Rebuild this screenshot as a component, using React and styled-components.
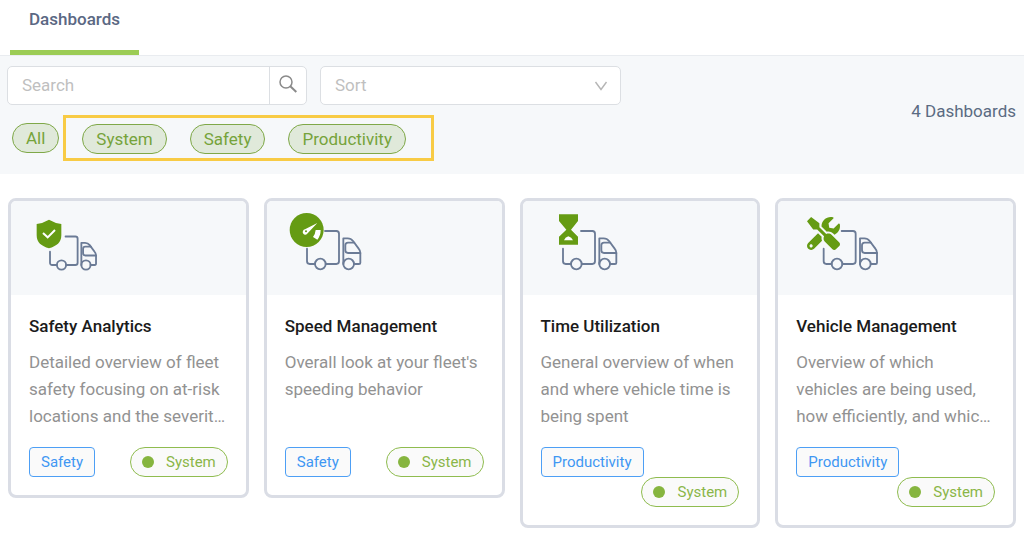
import React, { useState } from 'react'
import styled, { createGlobalStyle } from 'styled-components'
import { FaTools } from 'react-icons/fa'

const GlobalStyle = createGlobalStyle`
  * {
    box-sizing: border-box;
  }

  body {
    margin: 0;
    background: #fff;
    font-family: Roboto, Arial, sans-serif;
    font-size: 17px;
    color: #5b6b82;
  }

  button, input, select {
    font: inherit;
  }
`

const TabBar = styled.nav`
  display: flex;
  height: 56px;
  padding: 0 10px;
  border-bottom: 1px solid #e9ecf0;
`

const Tab = styled.a`
  height: 55px;
  padding: 8px 19px 0;
  border-bottom: 5px solid #9ccc55;
  font-weight: 500;
  line-height: 22px;
  color: #5b6883;
  text-decoration: none;
`

const Toolbar = styled.section`
  display: flex;
  align-items: center;
  justify-content: space-between;
  padding: 10px 8px 13px 7px;
  background: #f6f8fa;
`

const Fields = styled.div`
  display: flex;
  gap: 13px;
`

const SearchBox = styled.form`
  display: flex;
  width: 300px;
  height: 39px;
  background: #fff;
  border: 1px solid #dcdfe3;
  border-radius: 5px;
`

const SearchInput = styled.input`
  flex: 1;
  min-width: 0;
  padding: 0 14px 2px;
  border: 0;
  background: none;
  outline: none;

  &::placeholder {
    color: #bfbfbf;
  }
`

const SearchButton = styled.button`
  display: flex;
  align-items: center;
  justify-content: center;
  width: 37px;
  padding: 0 0 4px;
  border: 0;
  border-left: 1px solid #dcdfe3;
  background: none;
  color: #8a8a8a;
`

const SelectBox = styled.div`
  position: relative;
  width: 301px;

  svg {
    position: absolute;
    top: 13px;
    right: 13px;
    color: #b5b5b5;
    pointer-events: none;
  }
`

const Select = styled.select`
  width: 100%;
  height: 39px;
  padding: 0 14px 2px;
  appearance: none;
  background: #fff;
  border: 1px solid #dcdfe3;
  border-radius: 5px;
  color: #bfbfbf;
`

const Filters = styled.div`
  display: flex;
  align-items: center;
  gap: 4px;
  margin-top: 10px;
  padding-left: 5px;
`

const Highlight = styled.div`
  display: flex;
  gap: 23px;
  padding: 6px 25px 4px 16px;
  border: 3px solid #f8cb45;
`

const Pill = styled.button`
  height: 30px;
  padding: 0 13px;
  border: 1px solid #7fa848;
  border-radius: 15px;
  background: #e0e9da;
  color: #76a33a;
`

const Count = styled.div`
  padding-bottom: 6px;
`

const Cards = styled.main`
  display: grid;
  grid-template-columns: repeat(4, 1fr);
  gap: 15px;
  align-items: start;
  padding: 24px 8px 10px;

  @media (max-width: 800px) {
    grid-template-columns: repeat(2, 1fr);
  }
`

const Card = styled.article`
  overflow: hidden;
  border: 3px solid #dadde5;
  border-radius: 8px;
`

const CardHeader = styled.div`
  height: 94px;
  padding: 4px 18px 0;
  background: #f6f8fa;
`

const CardBody = styled.div`
  padding: 20px 18px 18px;
`

const CardTitle = styled.h2`
  margin: 0 0 12px;
  font-size: 17px;
  font-weight: 500;
  line-height: 22px;
  color: #1b1b1b;
`

const Description = styled.p`
  display: -webkit-box;
  height: 81px;
  margin: 0 0 17px;
  overflow: hidden;
  line-height: 27px;
  color: #929292;
  -webkit-box-orient: vertical;
  -webkit-line-clamp: 3;
`

const Tags = styled.div`
  display: flex;
  flex-wrap: wrap;
  column-gap: 8px;
`

const Tag = styled.span`
  height: 30px;
  padding: 0 11px;
  border: 1px solid #4d9ff5;
  border-radius: 4px;
  background: #fafafa;
  font-size: 15px;
  line-height: 28px;
  color: #3f97f3;
`

const SystemTag = styled(Tag)`
  display: flex;
  align-items: center;
  gap: 12px;
  margin-left: auto;
  border-color: #8fbc4f;
  border-radius: 15px;
  color: #8ab648;

  &::before {
    content: '';
    width: 12px;
    height: 12px;
    border-radius: 50%;
    background: #86b53f;
  }
`

function SearchIcon() {
  return (
    <svg width="20" height="20" viewBox="0 0 20 20" fill="none" stroke="currentColor">
      <circle cx="8" cy="8" r="6" strokeWidth="1.5" />
      <path d="M12.3 12.3 18.3 18" strokeWidth="2" />
    </svg>
  )
}

function ChevronIcon() {
  return (
    <svg width="14" height="14" viewBox="0 0 14 14" fill="none" stroke="currentColor">
      <path d="M1.5 3 7 10.5 12.5 3" strokeWidth="1.4" />
    </svg>
  )
}

function Truck({ x, y, scale = 1 }) {
  return (
    <g
      transform={`translate(${x} ${y}) scale(${scale})`}
      fill="none"
      stroke="#6b7b96"
      strokeWidth={5.5 / scale}
      strokeLinecap="round"
      strokeLinejoin="round"
    >
      <path d="M0-46V-8Q0 0 8 0H24M56 0H88Q96 0 96-8V-91Q96-99 88-99H54" />
      <path d="M109 0V-77H122Q132-77 138-69L155-46Q160-40 160-33V-4Q160 0 156 0H141" />
      <path d="M160-33H123Q115-33 115-41V-56Q115-64 123-64H142" />
      <circle cx="40" cy="0" r="16" />
      <circle cx="125" cy="0" r="16" />
    </g>
  )
}

const green = '#659b13'

function SafetyIcon() {
  return (
    <>
      <Truck x={63} y={180} scale={0.863} />
      <path
        d="M60 44Q77 54 97 57V91C97 112 83 124 60 130C37 124 23 112 23 91V57Q43 54 60 44Z"
        fill={green}
      />
      <path d="M42 84 56 97 78 75" fill="none" stroke="#fff" strokeWidth="6" />
    </>
  )
}

function SpeedIcon() {
  return (
    <>
      <Truck x={66} y={177} />
      <circle cx="65" cy="75" r="51" fill={green} />
      <path d="M97 54 68 85A8 8 0 1 1 60 73Z" fill="#fff" />
      <circle cx="63" cy="79" r="3" fill={green} />
      <path d="M92 75H107Q107 92 97 104L84 96Q91 87 92 75Z" fill="#fff" />
    </>
  )
}

function TimeIcon() {
  return (
    <>
      <Truck x={66} y={177} />
      <path d="M54 28H111V48L90 74 111 95V119H54V95L76 74 54 48Z" fill={green} />
      <path d="M69 106Q72 97 82 94Q92 97 96 106Z" fill="#fff" />
    </>
  )
}

function VehicleIcon() {
  return (
    <>
      <Truck x={83} y={177} />
      <FaTools x="33" y="36" size="99" color={green} />
    </>
  )
}

const filters = ['System', 'Safety', 'Productivity']

const dashboards = [
  {
    title: 'Safety Analytics',
    text: 'Detailed overview of fleet safety focusing on at-risk locations and the severity of events',
    tag: 'Safety',
    Icon: SafetyIcon
  },
  {
    title: 'Speed Management',
    text: "Overall look at your fleet's speeding behavior",
    tag: 'Safety',
    Icon: SpeedIcon
  },
  {
    title: 'Time Utilization',
    text: 'General overview of when and where vehicle time is being spent',
    tag: 'Productivity',
    Icon: TimeIcon
  },
  {
    title: 'Vehicle Management',
    text: 'Overview of which vehicles are being used, how efficiently, and which are idle',
    tag: 'Productivity',
    Icon: VehicleIcon
  }
]

function App() {
  const [search, setSearch] = useState('')

  return (
    <>
      <GlobalStyle />
      <TabBar>
        <Tab href="#dashboards">Dashboards</Tab>
      </TabBar>
      <Toolbar>
        <div>
          <Fields>
            <SearchBox onSubmit={(e) => e.preventDefault()}>
              <SearchInput
                aria-label="Search"
                placeholder="Search"
                value={search}
                onChange={(e) => setSearch(e.target.value)}
              />
              <SearchButton aria-label="Submit search">
                <SearchIcon />
              </SearchButton>
            </SearchBox>
            <SelectBox>
              <Select aria-label="Sort" defaultValue="">
                <option value="">Sort</option>
              </Select>
              <ChevronIcon />
            </SelectBox>
          </Fields>
          <Filters>
            <Pill>All</Pill>
            <Highlight>
              {filters.map((name) => (
                <Pill key={name}>{name}</Pill>
              ))}
            </Highlight>
          </Filters>
        </div>
        <Count>4 Dashboards</Count>
      </Toolbar>
      <Cards>
        {dashboards.map(({ title, text, tag, Icon }) => (
          <Card key={title}>
            <CardHeader>
              <svg width="100" height="80" viewBox="0 0 300 240">
                <Icon />
              </svg>
            </CardHeader>
            <CardBody>
              <CardTitle>{title}</CardTitle>
              <Description>{text}</Description>
              <Tags>
                <Tag>{tag}</Tag>
                <SystemTag>System</SystemTag>
              </Tags>
            </CardBody>
          </Card>
        ))}
      </Cards>
    </>
  )
}

export default App
